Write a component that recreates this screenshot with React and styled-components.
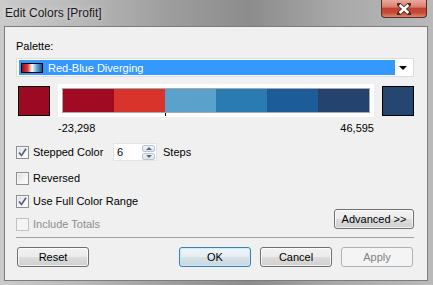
import React from 'react';
import styled, { createGlobalStyle } from 'styled-components';

const Global = createGlobalStyle`
  html, body { margin: 0; padding: 0; background: #a8a8a8; }
  body { font-family: "Liberation Sans", Arial, sans-serif; font-size: 11px; color: #000; }
`;

const Window = styled.div`
  width: 433px;
  height: 285px;
  display: flex;
  flex-direction: column;
  box-sizing: border-box;
  background: linear-gradient(90deg, #cbcbcb 0%, #b9b9b9 18%, #9c9c9c 40%, #8c8c8c 58%, #a9a9a9 78%, #b9b9b9 100%);
  overflow: hidden;
`;

const TitleBar = styled.div`
  height: 26px;
  display: flex;
  align-items: flex-start;
  justify-content: space-between;
  padding-left: 5px;
  padding-right: 6px;
  flex-shrink: 0;
`;

const Title = styled.div`
  font-size: 12px;
  line-height: 26px;
  color: #1a1a1a;
  text-shadow: 0 0 6px rgba(255, 255, 255, 0.7);
`;

const CloseBtn = styled.div`
  width: 46px;
  height: 18px;
  box-sizing: border-box;
  border: 1px solid #5e2a24;
  border-top: none;
  border-radius: 0 0 4px 4px;
  background: linear-gradient(180deg, #e8aa9e 0%, #d9826f 40%, #c2402f 50%, #c94a36 75%, #d98a6f 100%);
  display: flex;
  align-items: center;
  justify-content: center;
`;

const Client = styled.div`
  flex: 1;
  margin: 0 5px 4px 4px;
  border: 1px solid #7d7d7d;
  background: #f0f0f0;
  padding: 0 13px 0 11px;
  display: flex;
  flex-direction: column;
`;

const Label = styled.div`
  line-height: 14px;
  margin-top: ${p => p.mt || 0}px;
`;

const Dropdown = styled.div`
  height: 19px;
  margin-top: 5px;
  box-sizing: border-box;
  border: 1px solid #dcdcdc;
  background: #fff;
  display: flex;
  align-items: center;
  padding: 1px 2px;
`;

const Selected = styled.div`
  flex: 1;
  height: 15px;
  background: #3399ff;
  color: #fff;
  display: flex;
  align-items: center;
  gap: 5px;
  padding-left: 2px;
`;

const MiniRamp = styled.div`
  width: 22px;
  height: 10px;
  box-sizing: border-box;
  border: 1px solid #000;
  background: linear-gradient(90deg, #8d0c1e 0%, #de3a2c 28%, #ffffff 50%, #6aaed6 72%, #1d4f86 100%);
`;

const Arrow = styled.div`
  width: 16px;
  display: flex;
  justify-content: center;
  &::after {
    content: '';
    border-left: 4px solid transparent;
    border-right: 4px solid transparent;
    border-top: 4px solid #000;
  }
`;

const RampRow = styled.div`
  display: flex;
  align-items: center;
  gap: 8px;
  height: 33px;
  margin-top: 7px;
  padding-left: 2px;
`;

const Swatch = styled.div`
  width: 32px;
  height: 30px;
  box-sizing: border-box;
  border: 1px solid #000;
  background: ${p => p.color};
`;

const RampFrame = styled.div`
  position: relative;
  width: 316px;
  height: 33px;
  box-sizing: border-box;
  background: #fff;
  padding: 4px;
`;

const Ramp = styled.div`
  height: 25px;
  box-sizing: border-box;
  border: 1px solid #a8a8a8;
  display: flex;
`;

const Step = styled.div`
  flex: 1;
  background: ${p => p.color};
`;

const Tick = styled.div`
  position: absolute;
  left: 107px;
  top: 29px;
  width: 1px;
  height: 3px;
  background: #000;
`;

const RangeLabels = styled.div`
  margin-left: 42px;
  width: 316px;
  display: flex;
  justify-content: space-between;
  line-height: 14px;
  margin-top: 4px;
`;

const Options = styled.div`
  display: flex;
  justify-content: space-between;
`;

const CheckList = styled.div`
  display: flex;
  flex-direction: column;
`;

const CheckRow = styled.div`
  display: flex;
  align-items: center;
  height: 18px;
  margin-top: ${p => p.mt}px;
  color: ${p => (p.disabled ? '#8d8d8d' : '#000')};
`;

const Box = styled.div`
  width: 13px;
  height: 13px;
  box-sizing: border-box;
  border: 1px solid ${p => (p.disabled ? '#c2c2c2' : '#8e8f8f')};
  background: ${p => (p.disabled ? '#f4f4f4' : 'linear-gradient(135deg, #dcdcdc 0%, #f4f4f4 60%, #ffffff 100%)')};
  box-shadow: inset 0 0 0 1px ${p => (p.disabled ? '#f4f4f4' : '#f6f6f6')};
  margin-right: 4px;
  display: flex;
  align-items: center;
  justify-content: center;
`;

const CheckText = styled.span`
  width: ${p => (p.w ? `${p.w}px` : 'auto')};
`;

const Spinner = styled.div`
  width: 44px;
  height: 18px;
  box-sizing: border-box;
  border: 1px solid #e2e3ea;
  background: #fff;
  display: flex;
  align-items: center;
  justify-content: space-between;
  padding: 1px 1px 1px 3px;
`;

const SpinBtns = styled.div`
  width: 13px;
  height: 15px;
  display: flex;
  flex-direction: column;
  gap: 1px;
`;

const SpinBtn = styled.div`
  flex: 1;
  box-sizing: border-box;
  border: 1px solid #b9c2cf;
  border-radius: 2px;
  background: linear-gradient(180deg, #f2f4f7, #dfe4ea);
  display: flex;
  align-items: center;
  justify-content: center;
  &::after {
    content: '';
    border-left: 3px solid transparent;
    border-right: 3px solid transparent;
    ${p => (p.up ? 'border-bottom: 3px solid #4e6a8e;' : 'border-top: 3px solid #4e6a8e;')}
  }
`;

const StepsText = styled.span`
  margin-left: 6px;
`;

const AdvancedCol = styled.div`
  display: flex;
  align-items: flex-end;
  padding-bottom: 4px;
`;

const Button = styled.div`
  width: ${p => p.w || 72}px;
  height: 20px;
  box-sizing: border-box;
  border: 1px solid ${p => (p.disabled ? '#adb2b5' : p.primary ? '#3c7fb1' : '#707070')};
  border-radius: 3px;
  background: ${p =>
    p.disabled
      ? '#f4f4f4'
      : p.primary
      ? 'linear-gradient(180deg, #eef4f8 0%, #e6eef3 50%, #d6e1e8 51%, #cbd7df 100%)'
      : 'linear-gradient(180deg, #f2f2f2 0%, #ebebeb 50%, #dddddd 51%, #cfcfcf 100%)'};
  box-shadow: inset 0 0 0 1px ${p => (p.disabled ? '#f4f4f4' : p.primary ? 'rgba(200,235,250,0.9)' : 'rgba(255,255,255,0.7)')};
  color: ${p => (p.disabled ? '#838383' : '#000')};
  display: flex;
  align-items: center;
  justify-content: center;
  font-size: 11px;
`;

const Separator = styled.div`
  height: 1px;
  background: #a0a0a0;
  margin-top: 4px;
`;

const Buttons = styled.div`
  display: flex;
  gap: 9px;
  margin-top: 9px;
  padding-left: 1px;
  padding-right: 1px;
`;

const Spacer = styled.div`
  flex: 1;
`;

const steps = ['#a00b23', '#d9342b', '#5aa2cc', '#2b7bb3', '#1c5c99', '#24446f'];

function Check({ checked, disabled }) {
  return (
    <Box disabled={disabled}>
      {checked && (
        <svg width="9" height="9" viewBox="0 0 9 9">
          <path d="M1 4.5 L3.5 7.5 L8 0.8" fill="none" stroke="#4d5f8f" strokeWidth="1.6" />
        </svg>
      )}
    </Box>
  );
}

export default function App() {
  return (
    <>
      <Global />
      <Window>
        <TitleBar>
          <Title>Edit Colors [Profit]</Title>
          <CloseBtn>
            <svg width="14" height="12" viewBox="0 0 14 12">
              <path d="M2 1.5 L12 10.5 M12 1.5 L2 10.5" stroke="#4a2a26" strokeWidth="4.2" strokeLinecap="square" />
              <path d="M2.6 2 L11.4 10 M11.4 2 L2.6 10" stroke="#ffffff" strokeWidth="2.4" />
            </svg>
          </CloseBtn>
        </TitleBar>
        <Client>
          <Label mt={12}>Palette:</Label>
          <Dropdown>
            <Selected>
              <MiniRamp />
              Red-Blue Diverging
            </Selected>
            <Arrow />
          </Dropdown>
          <RampRow>
            <Swatch color="#9b0a22" />
            <RampFrame>
              <Ramp>
                {steps.map(c => (
                  <Step key={c} color={c} />
                ))}
              </Ramp>
              <Tick />
            </RampFrame>
            <Swatch color="#244670" />
          </RampRow>
          <RangeLabels>
            <span>-23,298</span>
            <span>46,595</span>
          </RangeLabels>
          <Options>
            <CheckList>
              <CheckRow mt={8}>
                <Check checked />
                <CheckText w={80}>Stepped Color</CheckText>
                <Spinner>
                  <span>6</span>
                  <SpinBtns>
                    <SpinBtn up />
                    <SpinBtn />
                  </SpinBtns>
                </Spinner>
                <StepsText>Steps</StepsText>
              </CheckRow>
              <CheckRow mt={8}>
                <Check />
                <CheckText>Reversed</CheckText>
              </CheckRow>
              <CheckRow mt={5}>
                <Check checked />
                <CheckText>Use Full Color Range</CheckText>
              </CheckRow>
              <CheckRow mt={5} disabled>
                <Check disabled />
                <CheckText>Include Totals</CheckText>
              </CheckRow>
            </CheckList>
            <AdvancedCol>
              <Button w={80}>Advanced &gt;&gt;</Button>
            </AdvancedCol>
          </Options>
          <Separator />
          <Buttons>
            <Button>Reset</Button>
            <Spacer />
            <Button primary>OK</Button>
            <Button>Cancel</Button>
            <Button disabled>Apply</Button>
          </Buttons>
        </Client>
      </Window>
    </>
  );
}
